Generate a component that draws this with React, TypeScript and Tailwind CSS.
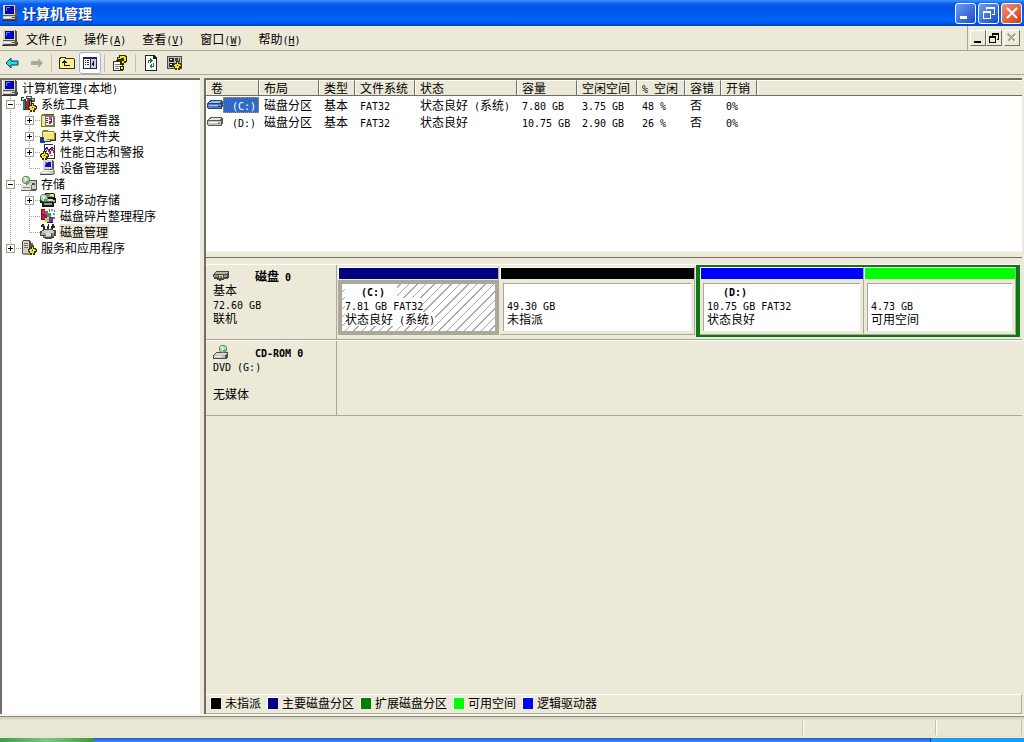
import React, { useState } from "react";

// Latin runs use a 6px wide mono face so they keep half the width of a Chinese character
const Mixed = ({ text }: { text: string }) => (
	<>
		{text.split(/([\x20-\x7e]+)/).map((run, i) =>
			i % 2 ? (
				<span key={i} className="font-['DejaVu_Sans_Mono',monospace] text-[10px] leading-none whitespace-pre">
					{run}
				</span>
			) : (
				run
			),
		)}
	</>
);

type IconProps = { className?: string };

const Svg = ({ children, className = "" }: { children: React.ReactNode; className?: string }) => (
	<svg width="16" height="16" viewBox="0 0 16 16" shapeRendering="crispEdges" aria-hidden="true" className={`shrink-0 ${className}`}>
		{children}
	</svg>
);

const ComputerIcon = ({ className }: IconProps) => (
	<Svg className={className}>
		<path d="M1 0h12l2 1v9l-1 1H1z" fill="#57584f" />
		<path d="M1 0h12v10H1z" fill="#d8d4c4" />
		<path d="M3 1h9v8H3z" fill="#0a0a60" />
		<path d="M4 2h7v6H4z" fill="#0000e0" />
		<path d="M4 2h4v1H5v3H4z" fill="#5c7cff" />
		<path d="M1 11h13l2 2v2H1z" fill="#4a4a44" />
		<path d="M1 11h12v3H1z" fill="#cfccbe" />
		<path d="M2 12h6v1H2z" fill="#fff" />
		<path d="M10 12h3v1h-3z" fill="#555" />
		<path d="M0 15h15v1H0z" fill="#333" />
	</Svg>
);

const Gear = ({ x = 0, y = 0 }: { x?: number; y?: number }) => (
	<g transform={`translate(${x} ${y})`}>
		<path d="M3 0h3v2h2v1h1v3H8v1H7v2H5V8H4v1H2V7H1V6H0V3h1V2h2z" fill="#3b3500" />
		<path d="M4 1h1v2h2v1h1v1H6v2H5v1H4V7H2V5H1V4h1V3h2z" fill="#efe13a" />
		<path d="M4 4h1v1H4z" fill="#222" />
	</g>
);

const ToolsIcon = () => (
	<Svg>
		<path d="M0 1h3v2h2v11H2V5H0z" fill="#3a3a3a" />
		<path d="M1 2h2v2H1z" fill="#d6d6d6" />
		<path d="M2 5h2v8H2z" fill="#0d8a92" />
		<path d="M5 0h6v2h3v4h-3V4H9v3H6V3H5z" fill="#4d4d4d" />
		<path d="M6 1h4v1H6zM11 3h2v1h-2z" fill="#ddd" />
		<path d="M5 5h3v9H5z" fill="#c51818" />
		<path d="M8 4h3v8H8z" fill="#1a1a1a" />
		<path d="M9 5h1v6H9z" fill="#8795e8" />
		<Gear x={7} y={7} />
	</Svg>
);

const EventIcon = () => (
	<Svg>
		<path d="M1 3h1V2h5v1h7v1h1v11H1z" fill="#858022" />
		<path d="M2 4h12v10H2z" fill="#f3eb84" />
		<path d="M4 2h10v1H4z" fill="#55543a" />
		<path d="M5 4h8v9H5z" fill="#fff" stroke="#777" />
		<path d="M6 6h2v1H6zM6 8h2v1H6zM6 10h2v1H6z" fill="#2b2ba8" />
		<path d="M9 5h3v3H9z" fill="#d0408c" />
		<path d="M9 9h2v3H9z" fill="#d02020" />
		<path d="M11 7h1v4h-1z" fill="#2020c0" />
	</Svg>
);

const SharedFolderIcon = () => (
	<Svg>
		<path d="M2 3h1V2h5v1h6v1h1v8H2z" fill="#8c8620" />
		<path d="M3 4h11v7H3z" fill="#f4ec72" />
		<path d="M4 4h9v1H4z" fill="#fffccb" />
		<path d="M15 5h1v8H8v-1h7z" fill="#333" />
		<path d="M0 9h4v2h3v1h4v2H5v1H0z" fill="#1b3c8c" />
		<path d="M4 11h3v1h3v1H4z" fill="#d7dce8" />
	</Svg>
);

const PerformanceIcon = () => (
	<Svg>
		<path d="M4 0h9v1h2v14H4z" fill="#333" />
		<path d="M5 1h9v13H5z" fill="#fff" />
		<path d="M5 6l2-3 2 4 3-4 2 2" stroke="#1b1bc0" fill="none" />
		<path d="M5 9l3-4 2 5 2-6 2 5" stroke="#c02050" fill="none" />
		<path d="M10 11h3v1h-3z" fill="#888" />
		<Gear x={0} y={7} />
	</Svg>
);

const DeviceIcon = () => (
	<Svg>
		<path d="M3 0h10v1h1v9H4V9H3z" fill="#55564e" />
		<path d="M3 0h9v9H3z" fill="#dbd8ca" />
		<path d="M5 2h6v5H5z" fill="#0a0ad0" />
		<path d="M5 2h3v1H6v2H5z" fill="#6a83ff" />
		<path d="M5 9h5v1H5z" fill="#777" />
		<path d="M2 11h10l1 1v2H0v-2h2z" fill="#c9c6b8" />
		<path d="M0 14h14v1H0z" fill="#444" />
		<path d="M2 12h8v1H2z" fill="#fff" />
		<path d="M12 9h2v1h1v4h-1v1h-2v-2h1v-3h-1z" fill="#8b94b5" />
	</Svg>
);

const Disc = ({ x, y }: { x: number; y: number }) => (
	<g transform={`translate(${x} ${y})`} shapeRendering="auto">
		<circle cx="4" cy="4" r="4" fill="#55695b" />
		<circle cx="4" cy="4" r="3.2" fill="#a9dcb4" />
		<path d="M4 4L1 2a4 4 0 0 1 3-1z" fill="#f3ef8a" />
		<path d="M4 4l3 1a4 4 0 0 1-3 2z" fill="#38b24c" />
		<circle cx="4" cy="4" r="1.1" fill="#fff" />
	</g>
);

const StorageIcon = () => (
	<Svg>
		<path d="M6 4h9l1 1v9h-1v1H5V8z" fill="#55554e" />
		<path d="M8 5h7v8H6V8z" fill="#cfcdc2" />
		<path d="M11 7h3v2h-3z" fill="#4d4d4d" />
		<path d="M0 9h11v6H0z" fill="#63635c" />
		<path d="M0 9h10v5H0z" fill="#e4e1d5" />
		<path d="M2 11h7v1H2z" fill="#888" />
		<Disc x={1} y={0} />
	</Svg>
);

const RemovableIcon = () => (
	<Svg>
		<path d="M5 1h9v1h1v4h1v5h-2v4H2v-4H0V6h3V4h2z" fill="#191919" />
		<path d="M6 2h7v3H6z" fill="#8b8b7f" />
		<path d="M3 7h10v2H3z" fill="#d7d4c6" />
		<path d="M4 11h8v2H4z" fill="#9b9a8e" />
		<path d="M5 9h7v1H5z" fill="#3c7a58" />
		<Disc x={0} y={2} />
		<path d="M10 2h4v3h-2V4h-2z" fill="#d6ee78" />
		<path d="M13 8h2v2h-2z" fill="#80d080" />
	</Svg>
);

const DefragIcon = () => (
	<Svg>
		<path d="M1 1h4v2h3v11H5v-2H1z" fill="#7a1010" />
		<path d="M2 2h3v4H2z" fill="#e02828" />
		<path d="M5 3h3v4H5z" fill="#d030b0" />
		<path d="M2 7h3v4H2z" fill="#c01c48" />
		<path d="M7 5h4v4H7z" fill="#26b03a" />
		<path d="M5 9h4v5H5z" fill="#e8c428" />
		<path d="M9 9h4v5H9z" fill="#5d33c8" />
		<path d="M5 7h2v3H5z" fill="#2432c8" />
		<path d="M7 14h6v1H7z" fill="#202020" />
		<path d="M11 1h2v2h-2zM13 5h2v2h-2z" fill="#40c070" />
		<path d="M9 1h1v3H9zM14 2h1v2h-1z" fill="#b638d8" />
		<path d="M13 9h2v2h-2z" fill="#e04040" />
	</Svg>
);

const DiskMgmtIcon = () => (
	<Svg>
		<path d="M2 0h2v2h1v4H3V3H1V1h1zM8 0h1v6H7V2h1zM12 0h2v2h1v2h-2v3h-2V2h1z" fill="#292929" />
		<path d="M4 5h9v1h3v6h-2v2h-2v1H5v-1H3v-2H0V7h2V6h2z" fill="#4b4b46" />
		<path d="M4 6h9v1h1v2H2V7h2z" fill="#d0cec3" />
		<path d="M1 9h8v2H1z" fill="#a6a498" />
		<path d="M6 9h5v3H6z" fill="#e0ddce" />
		<path d="M12 9h2v3h-2z" fill="#8a887d" />
		<path d="M4 12h7v1H4z" fill="#aaa89d" />
	</Svg>
);

const ServicesIcon = () => (
	<Svg>
		<path d="M2 0h7v1h1v13H1V1h1z" fill="#4c4c46" />
		<path d="M2 1h6v12H2z" fill="#d4d1c5" />
		<path d="M3 3h4v1H3zM3 5h4v1H3zM3 7h4v1H3z" fill="#77756b" />
		<path d="M2 13h9v2H2z" fill="#8f8d82" />
		<path d="M10 3h2v2h1v3h-2V6h-1z" fill="#68624a" />
		<Gear x={7} y={6} />
	</Svg>
);

const VolumeIcon = ({ selected }: { selected?: boolean }) => (
	<Svg>
		<path d="M3 3h12v1h1v6h-1v2H1v-1H0V6h1V5h1V4h1z" fill={selected ? "#23457e" : "#5c5c58"} />
		<path d="M4 4h10v1h-1v1H2V5h2z" fill={selected ? "#9bbcec" : "#e6e6e2"} />
		<path d="M1 7h13v4H1z" fill={selected ? "#4d7cc4" : "#c2c1bb"} />
		<path d="M2 8h9v1H2z" fill={selected ? "#a9c7f1" : "#fff"} />
		<path d="M11 9h2v1h-2z" fill={selected ? "#1f4384" : "#666"} />
	</Svg>
);

const HardDiskIcon = () => (
	<Svg>
		<path d="M4 3h11l1 1v5l-2 2h-3v1H8v1H6v-1H4v-1H1V9H0V6z" fill="#484844" />
		<path d="M4 4h11l-2 2H1z" fill="#b5b4ac" />
		<path d="M1 7h4v2H1zM11 7h3v2h-3z" fill="#97968d" />
		<path d="M6 7h4v3H6z" fill="#d9d28c" />
		<path d="M7 8h2v2H7z" fill="#77793b" />
	</Svg>
);

const CdRomIcon = () => (
	<Svg>
		<path d="M3 8h12v5l-2 2H0v-4z" fill="#50504c" />
		<path d="M3 9h11l-2 2H1z" fill="#dcdad0" />
		<path d="M1 11h11v3H1z" fill="#c1bfb4" />
		<path d="M2 12h7v1H2z" fill="#fff" />
		<Disc x={6} y={1} />
	</Svg>
);

const BackIcon = () => (
	<Svg>
		<path d="M2 8l5-5v3h7v4H7v3z" fill="#21dbe6" stroke="#083c55" shapeRendering="auto" />
	</Svg>
);

const ForwardIcon = () => (
	<Svg>
		<path d="M15 8l-5-5v3H3v4h7v3z" fill="#aaa89c" shapeRendering="auto" />
	</Svg>
);

const UpFolderIcon = () => (
	<Svg>
		<path d="M0 3h1V2h6v1h8v1h1v10H0z" fill="#37351b" />
		<path d="M1 4h14v9H1z" fill="#f8f18a" />
		<path d="M2 3h4v1H2z" fill="#fffcc4" />
		<path d="M5 5h1v1h1v1h1v1H6v2h5v1H5V8H3V7h1V6h1z" fill="#111" />
	</Svg>
);

const ShowTreeIcon = () => (
	<Svg>
		<path d="M1 2h14v12H1z" fill="#25254f" />
		<path d="M2 4h6v9H2z" fill="#fff" />
		<path d="M9 4h5v9H9z" fill="#c9cbe2" />
		<path d="M3 5h1v1H3zM5 5h2v1H5zM3 7h1v1H3zM5 7h2v1H5zM3 9h1v1H3zM5 9h2v1H5z" fill="#25254f" />
		<path d="M12 5v7l-1-1v-1h-1V8h1V6z" fill="#111" />
	</Svg>
);

const HelpIcon = () => (
	<Svg>
		<path d="M1 6h3V5h7v11H1z" fill="#333" />
		<path d="M2 7h8v8H2z" fill="#fff" />
		<path d="M3 9h5v1H3zM3 11h5v1H3zM3 13h4v1H3z" fill="#777" />
		<path d="M7 0h7v1h1v6h-1v1h-2v2H8V6h2V5H9v1H5V2h2z" fill="#2e2b00" />
		<path d="M8 1h5v1h1v4h-2v2h-2V6h2V3H9v1H6V3h2z" fill="#f4e414" />
		<path d="M8 11h4v4H8z" fill="#2e2b00" />
		<path d="M9 12h2v2H9z" fill="#f4e414" />
	</Svg>
);

const RefreshIcon = () => (
	<Svg>
		<path d="M2 0h9l3 3v13H2z" fill="#222" />
		<path d="M3 1h7v3h3v11H3z" fill="#fff" />
		<path d="M5 8V5h2V3l3 3-3 2V6H6v2zM11 8v4H9v2l-3-3 3-2v2h1V8z" fill="#18813c" />
	</Svg>
);

const SettingsIcon = () => (
	<Svg>
		<path d="M0 1h15v13H0z" fill="#4b4b47" />
		<path d="M1 2h13v11H1z" fill="#c1bfb4" />
		<path d="M2 3h5v4H2zM2 8h5v4H2z" fill="#26262a" />
		<path d="M3 4h2v1H3zM3 9h2v1H3z" fill="#fff" />
		<path d="M8 3h3v3H8zM12 3h1v4h-1z" fill="#444" />
		<Gear x={6} y={6} />
	</Svg>
);

// ---- title bar, menu and toolbar ----

const captionButton = "flex h-[21px] w-[21px] items-center justify-center rounded-[3px] border border-white";

const TitleBar = () => (
	<header className="flex h-[26px] items-center bg-[linear-gradient(to_bottom,#3c96ff_0px,#0a5cf0_4px,#0054e3_9px,#0062fb_19px,#0060f5_22px,#0040c0_26px)] pr-[2px] pl-[2px]">
		<ComputerIcon />
		<h1 className="ml-1 flex-1 text-[14px] leading-4 font-bold text-white [text-shadow:1px_1px_0_#0a2a80]">计算机管理</h1>
		<div className="flex gap-[2px]">
			<button aria-label="最小化" className={`${captionButton} bg-linear-to-br from-[#6f9cf5] to-[#1947d0]`}>
				<Svg>
					<path d="M2 11h7v3H2z" fill="#fff" />
				</Svg>
			</button>
			<button aria-label="还原" className={`${captionButton} bg-linear-to-br from-[#6f9cf5] to-[#1947d0]`}>
				<Svg>
					<path d="M5 2h9v8h-3V9h2V4H6v1H5zM2 6h8v8H2zM3 8v5h6V8z" fill="#fff" fillRule="evenodd" />
				</Svg>
			</button>
			<button aria-label="关闭" className={`${captionButton} bg-linear-to-br from-[#f09277] to-[#cf3711]`}>
				<Svg>
					<path d="M3 3l10 10M13 3L3 13" stroke="#fff" strokeWidth="2" shapeRendering="auto" />
				</Svg>
			</button>
		</div>
	</header>
);

const menus = [
	["文件", "F"],
	["操作", "A"],
	["查看", "V"],
	["窗口", "W"],
	["帮助", "H"],
];

const childButton = "flex h-4 w-4 items-center justify-center border border-t-white border-l-white border-r-[#716f64] border-b-[#716f64]";

const MenuBar = () => (
	<div className="flex h-[25px] items-center border-b border-[#aca899] pl-[2px]">
		<ComputerIcon />
		<nav className="flex flex-1 pt-px">
			{menus.map(([label, key]) => (
				<button key={key} className="px-2">
					{label}
					<span className="font-['DejaVu_Sans_Mono',monospace] text-[10px] leading-none">
						(<u>{key}</u>)
					</span>
				</button>
			))}
		</nav>
		<div className="flex h-full items-center border-l border-[#aca899] pr-1 pl-[2px]">
			<button aria-label="最小化子窗口" className={childButton}>
				<Svg>
					<path d="M4 11h7v2H4z" fill="#000" />
				</Svg>
			</button>
			<button aria-label="还原子窗口" className={childButton}>
				<Svg>
					<path d="M6 3h7v7h-2V9h1V5H7v1H6zM3 6h7v7H3zM4 8v4h5V8z" fill="#000" fillRule="evenodd" />
				</Svg>
			</button>
			<button aria-label="关闭子窗口" className={`${childButton} ml-[2px]`}>
				<Svg>
					<path d="M5 5l7 7M12 5l-7 7" stroke="#fff" strokeWidth="2" />
					<path d="M4 4l7 7M11 4l-7 7" stroke="#aca899" strokeWidth="2" />
				</Svg>
			</button>
		</div>
	</div>
);

const Separator = () => <span className="h-[18px] w-px bg-[#c5c2b2]" />;

const toolButton = "flex h-[22px] items-center justify-center";

const Toolbar = () => (
	<div className="flex h-6 items-center border-b border-[#aca899]">
		<button aria-label="后退" className={`${toolButton} w-6`}>
			<BackIcon />
		</button>
		<button aria-label="前进" className={`${toolButton} w-6`} disabled>
			<ForwardIcon />
		</button>
		<div className="flex items-center gap-[3px] pl-[3px]">
			<Separator />
			<div className="flex">
				<button aria-label="向上" className={`${toolButton} w-6`}>
					<UpFolderIcon />
				</button>
				<button aria-label="显示/隐藏控制台树" className={`${toolButton} w-[22px] rounded-[3px] border border-[#98b5e2] bg-white`}>
					<ShowTreeIcon />
				</button>
			</div>
			<Separator />
			<button aria-label="帮助" className={`${toolButton} w-6`}>
				<HelpIcon />
			</button>
			<Separator />
			<div className="flex">
				<button aria-label="刷新" className={`${toolButton} w-6`}>
					<RefreshIcon />
				</button>
				<button aria-label="设置" className={`${toolButton} w-6`}>
					<SettingsIcon />
				</button>
			</div>
		</div>
	</div>
);

// ---- console tree ----

interface TreeNode {
	label: string;
	icon: React.ReactNode;
	children?: TreeNode[];
	expandable?: boolean;
	selected?: boolean;
}

const tree: TreeNode[] = [
	{
		label: "系统工具",
		icon: <ToolsIcon />,
		expandable: true,
		children: [
			{ label: "事件查看器", icon: <EventIcon />, expandable: true },
			{ label: "共享文件夹", icon: <SharedFolderIcon />, expandable: true },
			{ label: "性能日志和警报", icon: <PerformanceIcon />, expandable: true },
			{ label: "设备管理器", icon: <DeviceIcon /> },
		],
	},
	{
		label: "存储",
		icon: <StorageIcon />,
		expandable: true,
		children: [
			{ label: "可移动存储", icon: <RemovableIcon />, expandable: true },
			{ label: "磁盘碎片整理程序", icon: <DefragIcon /> },
			{ label: "磁盘管理", icon: <DiskMgmtIcon />, selected: true },
		],
	},
	{ label: "服务和应用程序", icon: <ServicesIcon />, expandable: true },
];

interface GuideProps {
	last?: boolean;
	branch?: boolean;
	box?: "plus" | "minus";
}

const Guide = ({ last, branch, box }: GuideProps) => (
	<svg width="19" height="16" viewBox="0 0 19 16" shapeRendering="crispEdges" aria-hidden="true" className="shrink-0">
		<path d={last ? "M8.5 0v8" : "M8.5 0v16"} stroke="#a0a0a0" strokeDasharray="1 1" />
		{branch && <path d="M8 8.5h11" stroke="#a0a0a0" strokeDasharray="1 1" />}
		{box && (
			<>
				<rect x="4.5" y="4.5" width="8" height="8" fill="#fff" stroke="#a09e90" />
				<path d={box === "plus" ? "M6 8.5h5M8.5 6v5" : "M6 8.5h5"} stroke="#000" />
			</>
		)}
	</svg>
);

const TreeItem = ({ node, depth, last }: { node: TreeNode; depth: number; last: boolean }) => {
	const [open, setOpen] = useState(!!node.children);

	return (
		<li>
			<div className="flex h-4 items-center">
				{depth > 0 && <Guide />}
				{node.expandable ? (
					<button aria-label={`展开或折叠${node.label}`} onClick={() => setOpen(!open)}>
						<Guide branch last={last} box={open && node.children ? "minus" : "plus"} />
					</button>
				) : (
					<Guide branch last={last} />
				)}
				{node.icon}
				<span className={`ml-[3px] px-px whitespace-nowrap ${node.selected ? "bg-[#ece9d8]" : ""}`}>{node.label}</span>
			</div>
			{open && node.children && (
				<ul>
					{node.children.map((child, i) => (
						<TreeItem key={child.label} node={child} depth={depth + 1} last={i === node.children!.length - 1} />
					))}
				</ul>
			)}
		</li>
	);
};

const ConsoleTree = () => (
	<aside className="w-[200px] shrink-0 border-t-2 border-l-2 border-[#716f64] bg-white">
		<div className="flex h-4 items-center">
			<ComputerIcon />
			<span className="ml-1">
				<Mixed text="计算机管理(本地)" />
			</span>
		</div>
		<ul>
			{tree.map((node, i) => (
				<TreeItem key={node.label} node={node} depth={0} last={i === tree.length - 1} />
			))}
		</ul>
	</aside>
);

// ---- volume list ----

const columns = ["卷", "布局", "类型", "文件系统", "状态", "容量", "空闲空间", "% 空闲", "容错", "开销"];

const volumes = [
	{ name: "(C:)", selected: true, cells: ["磁盘分区", "基本", "FAT32", "状态良好 (系统)", "7.80 GB", "3.75 GB", "48 %", "否", "0%"] },
	{ name: "(D:)", selected: false, cells: ["磁盘分区", "基本", "FAT32", "状态良好", "10.75 GB", "2.90 GB", "26 %", "否", "0%"] },
];

const VolumeList = () => (
	<div className="h-[171px] bg-white">
		<table className="w-full table-fixed border-separate border-spacing-0 text-left">
			<colgroup>
				<col className="w-[53px]" />
				<col className="w-[60px]" />
				<col className="w-9" />
				<col className="w-[60px]" />
				<col className="w-[102px]" />
				<col className="w-[60px]" />
				<col className="w-[60px]" />
				<col className="w-12" />
				<col className="w-9" />
				<col className="w-9" />
				<col />
			</colgroup>
			<thead>
				<tr className="h-4 bg-[#ebe8d8]">
					{columns.map((c) => (
						<th
							key={c}
							scope="col"
							className="border-t border-r border-b border-t-white border-r-[#716f64] border-b-[#716f64] p-0 pl-[5px] leading-[14px] font-normal whitespace-nowrap shadow-[inset_1px_0_0_#fff]"
						>
							<Mixed text={c} />
						</th>
					))}
					<td className="border-t border-b border-t-white border-b-[#716f64] p-0 shadow-[inset_1px_0_0_#fff]" />
				</tr>
			</thead>
			<tbody>
				{volumes.map((v) => (
					<tr key={v.name} className="h-[17px]">
						<td className="p-0">
							<div className="flex items-center pl-px">
								<VolumeIcon selected={v.selected} />
								<span className={`flex-1 pl-[9px] ${v.selected ? "bg-[#316ac5] text-white outline-1 -outline-offset-1 outline-[#d0953a] outline-dotted" : ""}`}>
									<Mixed text={v.name} />
								</span>
							</div>
						</td>
						{v.cells.map((cell, i) => (
							<td key={i} className="p-0 pl-[5px] whitespace-nowrap">
								<Mixed text={cell} />
							</td>
						))}
						<td className="p-0" />
					</tr>
				))}
			</tbody>
		</table>
	</div>
);

// ---- graphical view ----

interface PartitionProps {
	name?: string;
	size: string;
	status: string;
	bar: string;
	selected?: boolean;
}

const Partition = ({ name, size, status, bar, selected }: PartitionProps) => (
	<div className="flex min-w-0 flex-col border-r border-[#aca899]">
		<div className={`h-3 border-t border-l border-white ${bar}`} />
		<div className={`mt-px flex-1 border-b border-[#aca899] p-[3px] ${selected ? "bg-[#aca899]" : ""}`}>
			<div
				className={`h-full overflow-hidden border-t border-l border-[#aca899] px-[3px] leading-[14px] whitespace-nowrap ${
					selected ? "bg-[repeating-linear-gradient(135deg,#fff_0px,#fff_5px,#a8a8a8_5px,#a8a8a8_6px)]" : "bg-white"
				}`}
			>
				<p className="flex h-[14px] font-bold">
					{name && (
						<span className="bg-white pr-3 pl-4">
							<Mixed text={name} />
						</span>
					)}
				</p>
				<p className="flex">
					<span className="bg-white">
						<Mixed text={size} />
					</span>
				</p>
				<p className="flex">
					<span className="bg-white">
						<Mixed text={status} />
					</span>
				</p>
			</div>
		</div>
	</div>
);

interface DiskRowProps {
	icon: React.ReactNode;
	title: string;
	lines: string[];
	children?: React.ReactNode;
}

const DiskRow = ({ icon, title, lines, children }: DiskRowProps) => (
	<section className="flex h-[76px] border-t border-b border-t-white border-b-[#aca899]">
		<div className="w-[131px] shrink-0 border-r border-[#aca899] pt-1 pl-[7px] leading-[14px]">
			<div className="flex h-[14px] items-center">
				{icon}
				<h2 className="ml-[26px] font-bold">
					<Mixed text={title} />
				</h2>
			</div>
			{lines.map((line, i) => (
				<p key={i} className="h-[14px]">
					<Mixed text={line} />
				</p>
			))}
		</div>
		{children}
	</section>
);

const legend = [
	{ label: "未指派", color: "bg-black" },
	{ label: "主要磁盘分区", color: "bg-[#000080]" },
	{ label: "扩展磁盘分区", color: "bg-[#008000]" },
	{ label: "可用空间", color: "bg-[#00ff00]" },
	{ label: "逻辑驱动器", color: "bg-[#0000ff]" },
];

const Legend = () => (
	<ul className="flex h-5 items-center gap-[6px] border-t border-r border-b border-t-white border-r-[#aca899] border-b-[#aca899] pb-[2px] pl-1 whitespace-nowrap">
		{legend.map((item) => (
			<li key={item.label} className="flex items-center gap-1">
				<span className={`h-3 w-[11px] border-t border-l border-white ${item.color}`} />
				{item.label}
			</li>
		))}
	</ul>
);

const DiskView = () => (
	<div className="flex flex-1 flex-col pt-[6px]">
		<DiskRow icon={<HardDiskIcon />} title="磁盘 0" lines={["基本", "72.60 GB", "联机"]}>
			<div className="grid flex-1 grid-cols-[161fr_195fr_324fr] gap-px pr-[2px] pl-px">
				<div className="grid pt-[2px] pb-1">
					<Partition name="(C:)" size="7.81 GB FAT32" status="状态良好 (系统)" bar="bg-[#000080]" selected />
				</div>
				<div className="grid pt-[2px] pb-1">
					<Partition size="49.30 GB" status="未指派" bar="bg-black" />
				</div>
				<div className="mb-[2px] grid grid-cols-[164fr_152fr] border-x-4 border-y-2 border-[#0b7a14]">
					<Partition name="(D:)" size="10.75 GB FAT32" status="状态良好" bar="bg-[#0000ff]" />
					<Partition size="4.73 GB" status="可用空间" bar="bg-[#00ff00]" />
				</div>
			</div>
		</DiskRow>
		<DiskRow icon={<CdRomIcon />} title="CD-ROM 0" lines={["DVD (G:)", "", "无媒体"]} />
		<div className="flex-1" />
		<Legend />
	</div>
);

const StatusBar = () => (
	<footer className="flex h-[22px] border-t border-[#8d8a7c] bg-linear-to-b from-[#d0cdbd] via-[#ece9d8] via-20% to-[#e8e5d4] py-[3px] pr-[2px]">
		<div className="flex-1 border-r border-[#c5c2b2]" />
		<div className="w-[133px] border-r border-[#c5c2b2] shadow-[inset_1px_0_0_#fff]" />
		<div className="w-[86px] border-r border-[#c5c2b2] shadow-[inset_1px_0_0_#fff]" />
	</footer>
);

const App = () => (
	<div className="flex min-h-screen flex-col bg-[#ece9d8] font-['Noto_Sans_CJK_SC',sans-serif] text-[12px] leading-4 text-black">
		<TitleBar />
		<MenuBar />
		<Toolbar />
		<main className="mt-[3px] flex flex-1 gap-1 pr-[2px]">
			<ConsoleTree />
			<div className="flex min-w-0 flex-1 flex-col border-t-2 border-l-2 border-[#716f64]">
				<VolumeList />
				<div className="h-[7px] border-b border-[#716f64] shadow-[inset_0_1px_0_#f8f6ec]" />
				<DiskView />
			</div>
		</main>
		<div className="h-[2px] bg-[#f8f6ec]" />
		<StatusBar />
		<div className="flex h-1">
			<div className="w-[94px] bg-linear-to-r from-[#3f9c48] via-[#7fc77e] to-[#3a9a3a]" />
			<div className="flex-1 bg-linear-to-b from-[#1f5fd0] to-[#3f8cf0]" />
			<div className="w-[94px] border-l border-[#0a3c90] bg-[#1a9cf0]" />
		</div>
	</div>
);

export default App;
